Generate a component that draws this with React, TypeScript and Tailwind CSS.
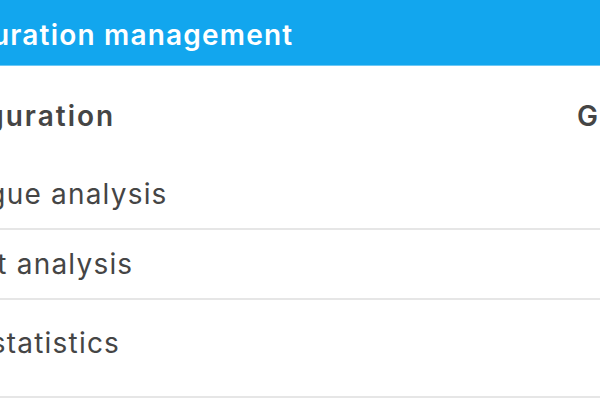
export default function App() {
  const font = { fontFamily: 'Inter, "Noto Sans", sans-serif' };
  return (
    <div className="w-[600px] h-[400px] overflow-hidden bg-white" style={font}>
      <div className="h-[66px] bg-[#12a6ee] border-b border-[#6cc8f5] flex items-center pt-[4px]">
        <h1 className="ml-[-106px] text-[28px] font-semibold text-white whitespace-nowrap tracking-[1.2px]">
          Configuration management
        </h1>
      </div>
      <div className="ml-[-84px] w-[760px] text-[#454545]">
        <div className="h-[94px] flex items-center pt-[6px] text-[28px] font-semibold tracking-[2px]">
          <div className="ml-[-13px] w-[674px]">Configuration</div>
          <div>Goal</div>
        </div>
        <div className="h-[70px] flex items-center text-[28px] tracking-[1.2px] border-b-2 border-[#e6e6e6]">
          Dialogue analysis
        </div>
        <div className="h-[70px] flex items-center text-[28px] tracking-[1.2px] border-b-2 border-[#e6e6e6]">
          Target analysis
        </div>
        <div className="h-[98px] flex items-start pt-[22px] text-[28px] tracking-[1.2px] border-b-2 border-[#e6e6e6]">
          Data statistics
        </div>
      </div>
    </div>
  );
}
